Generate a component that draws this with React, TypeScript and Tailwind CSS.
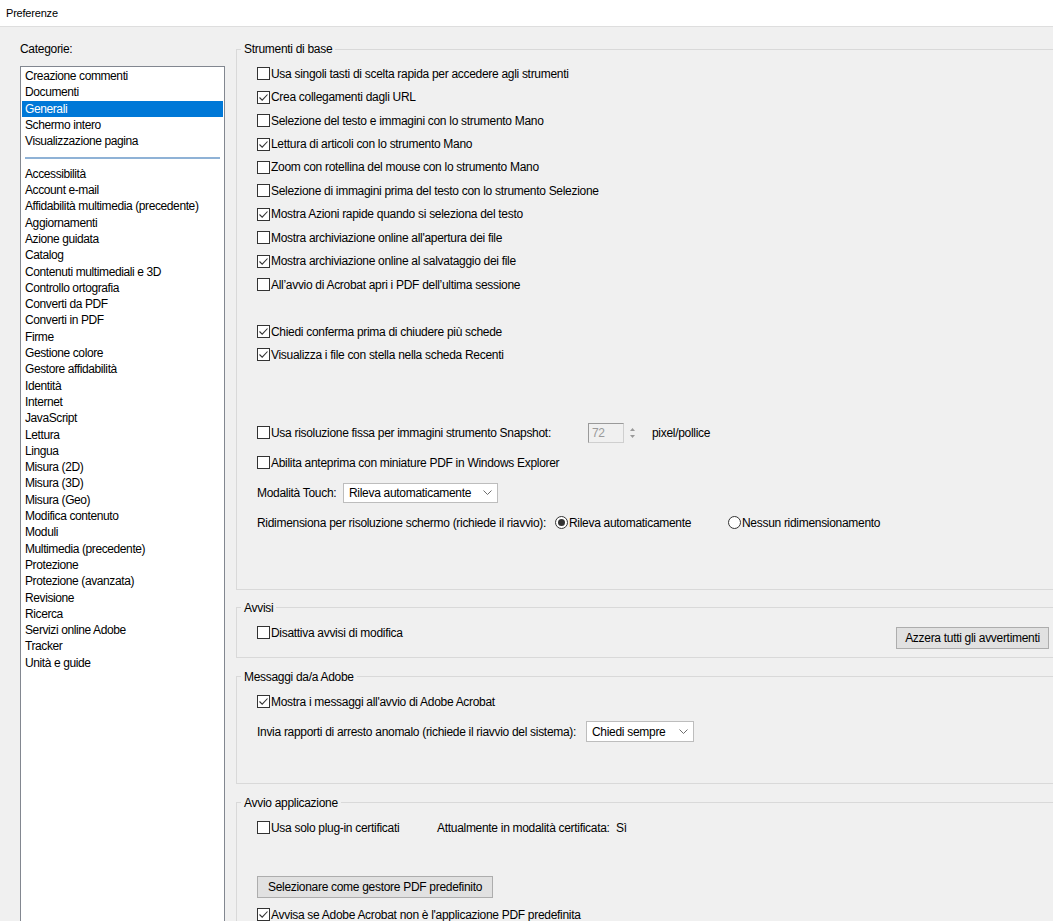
import React from "react";

const top = ["Creazione commenti", "Documenti", "Generali", "Schermo intero", "Visualizzazione pagina"];
const rest = [
  "Accessibilità",
  "Account e-mail",
  "Affidabilità multimedia (precedente)",
  "Aggiornamenti",
  "Azione guidata",
  "Catalog",
  "Contenuti multimediali e 3D",
  "Controllo ortografia",
  "Converti da PDF",
  "Converti in PDF",
  "Firme",
  "Gestione colore",
  "Gestore affidabilità",
  "Identità",
  "Internet",
  "JavaScript",
  "Lettura",
  "Lingua",
  "Misura (2D)",
  "Misura (3D)",
  "Misura (Geo)",
  "Modifica contenuto",
  "Moduli",
  "Multimedia (precedente)",
  "Protezione",
  "Protezione (avanzata)",
  "Revisione",
  "Ricerca",
  "Servizi online Adobe",
  "Tracker",
  "Unità e guide",
];

function Box({ checked = false }: { checked?: boolean }) {
  return (
    <span className="w-[13px] h-[13px] border border-[#333333] bg-white shrink-0 flex items-center justify-center">
      {checked && (
        <svg width="11" height="11" viewBox="0 0 11 11">
          <path d="M1.5 5.5 L4.2 8.2 L9.5 2.5" stroke="#333333" strokeWidth="1.1" fill="none" />
        </svg>
      )}
    </span>
  );
}

function Check({ checked = false, label }: { checked?: boolean; label: string }) {
  return (
    <div className="h-[23.44px] flex items-center gap-[1px]">
      <Box checked={checked} />
      <span className="whitespace-nowrap">{label}</span>
    </div>
  );
}

function Radio({ on = false }: { on?: boolean }) {
  return (
    <span className="w-[13px] h-[13px] rounded-full border border-[#333333] bg-white shrink-0 flex items-center justify-center">
      {on && <span className="w-[7px] h-[7px] rounded-full bg-[#333333]" />}
    </span>
  );
}

function Select({ value, w, h }: { value: string; w: string; h: string }) {
  return (
    <div className={`${w} ${h} border border-[#bdbdbd] bg-white flex items-center`}>
      <span className="flex-1 pl-[5px] whitespace-nowrap">{value}</span>
      <span className="w-[20px] h-full flex items-center justify-center">
        <svg width="9" height="5" viewBox="0 0 9 5">
          <path d="M0.5 0.5 L4.5 4.5 L8.5 0.5" stroke="#6d6d6d" strokeWidth="1" fill="none" />
        </svg>
      </span>
    </div>
  );
}

function Btn({ label, w }: { label: string; w: string }) {
  return (
    <div className={`${w} h-[22px] border border-[#adadad] bg-[#e1e1e1] flex items-center justify-center whitespace-nowrap`}>
      {label}
    </div>
  );
}

function Group({ title, className = "", children }: { title: string; className?: string; children: React.ReactNode }) {
  return (
    <fieldset className={`border border-[#d9d9d9] w-[819px] ${className}`}>
      <legend className="ml-[4px] px-[3px] leading-[16px] whitespace-nowrap">{title}</legend>
      {children}
    </fieldset>
  );
}

export default function App() {
  return (
    <div className="w-[1053px] h-[921px] overflow-hidden bg-[#f0f0f0] text-[12px] tracking-[-0.3px] text-black font-['Liberation_Sans',Arial,sans-serif] flex flex-col">
      <div className="h-[27px] shrink-0 bg-white border-b border-[#dedede] pl-[6px] flex items-center text-[11px] tracking-[-0.2px]">
        Preferenze
      </div>
      <div className="flex flex-row flex-1 min-h-0">
        <div className="w-[236px] shrink-0 pl-[20px] pt-[14px] flex flex-col">
          <div className="h-[16px] leading-[16px]">Categorie:</div>
          <div className="mt-[9px] pt-[1px] w-[205px] h-[870px] shrink-0 border border-[#828790] bg-white tracking-[-0.4px]">
            {top.map((t) => (
              <div
                key={t}
                className={
                  t === "Generali"
                    ? "h-[16.3px] leading-[16.3px] mx-[1px] pl-[3px] bg-[#0078d7] text-white whitespace-nowrap"
                    : "h-[16.3px] leading-[16.3px] pl-[4px] whitespace-nowrap"
                }
              >
                {t}
              </div>
            ))}
            <div className="h-[16.3px] flex items-center px-[4px]">
              <div className="w-full h-[2px] bg-[#8fb2d6]" />
            </div>
            {rest.map((t) => (
              <div key={t} className="h-[16.3px] leading-[16.3px] pl-[4px] whitespace-nowrap">
                {t}
              </div>
            ))}
          </div>
        </div>
        <div className="w-[819px] shrink-0 pt-[14px] flex flex-col">
          <Group title="Strumenti di base">
            <div className="pl-[20px] pt-[5px] pb-[51px] flex flex-col">
              <Check label="Usa singoli tasti di scelta rapida per accedere agli strumenti" />
              <Check checked label="Crea collegamenti dagli URL" />
              <Check label="Selezione del testo e immagini con lo strumento Mano" />
              <Check checked label="Lettura di articoli con lo strumento Mano" />
              <Check label="Zoom con rotellina del mouse con lo strumento Mano" />
              <Check label="Selezione di immagini prima del testo con lo strumento Selezione" />
              <Check checked label="Mostra Azioni rapide quando si seleziona del testo" />
              <Check label="Mostra archiviazione online all'apertura dei file" />
              <Check checked label="Mostra archiviazione online al salvataggio dei file" />
              <Check label="All’avvio di Acrobat apri i PDF dell’ultima sessione" />
              <div className="h-[23.44px]" />
              <Check checked label="Chiedi conferma prima di chiudere più schede" />
              <Check checked label="Visualizza i file con stella nella scheda Recenti" />

              <div className="mt-[51px] h-[30px] flex items-center">
                <div className="w-[331px] flex items-center gap-[1px]">
                  <Box />
                  <span className="whitespace-nowrap">Usa risoluzione fissa per immagini strumento Snapshot:</span>
                </div>
                <div className="w-[36px] h-[20px] border border-[#cfcfcf] border-t-[#9a9a9a] border-l-[#9a9a9a] bg-[#f0f0f0] pl-[3px] flex items-center text-[#9a9a9a]">
                  72
                </div>
                <div className="ml-[2px] w-[13px] h-[20px] flex flex-col items-center justify-center gap-[4px]">
                  <svg width="5" height="3" viewBox="0 0 5 3">
                    <path d="M0 3 L2.5 0 L5 3 Z" fill="#9a9a9a" />
                  </svg>
                  <svg width="5" height="3" viewBox="0 0 5 3">
                    <path d="M0 0 L2.5 3 L5 0 Z" fill="#9a9a9a" />
                  </svg>
                </div>
                <span className="ml-[13px] whitespace-nowrap">pixel/pollice</span>
              </div>
              <div className="h-[30px] flex items-center gap-[1px]">
                <Box />
                <span className="whitespace-nowrap">Abilita anteprima con miniature PDF in Windows Explorer</span>
              </div>
              <div className="h-[30px] flex items-center">
                <span className="w-[86px] whitespace-nowrap">Modalità Touch:</span>
                <Select value="Rileva automaticamente" w="w-[155px]" h="h-[20px]" />
              </div>
              <div className="h-[30px] flex items-center">
                <span className="w-[298px] whitespace-nowrap">Ridimensiona per risoluzione schermo (richiede il riavvio):</span>
                <div className="w-[173px] flex items-center gap-[1px]">
                  <Radio on />
                  <span className="whitespace-nowrap">Rileva automaticamente</span>
                </div>
                <div className="flex items-center gap-[1px]">
                  <Radio />
                  <span className="whitespace-nowrap">Nessun ridimensionamento</span>
                </div>
              </div>
            </div>
          </Group>

          <Group title="Avvisi" className="mt-[10px]">
            <div className="pl-[20px] pr-[5px] pt-[5px] pb-[8px] flex items-start justify-between">
              <div className="h-[24px] flex items-center gap-[1px]">
                <Box />
                <span className="whitespace-nowrap">Disattiva avvisi di modifica</span>
              </div>
              <div className="mt-[6px]">
                <Btn label="Azzera tutti gli avvertimenti" w="w-[153px]" />
              </div>
            </div>
          </Group>

          <Group title="Messaggi da/a Adobe" className="mt-[11px]">
            <div className="pl-[20px] pt-[5px] pb-[36px] flex flex-col">
              <div className="h-[24px] flex items-center gap-[1px]">
                <Box checked />
                <span className="whitespace-nowrap">Mostra i messaggi all'avvio di Adobe Acrobat</span>
              </div>
              <div className="mt-[3px] h-[30px] flex items-center">
                <span className="w-[329px] whitespace-nowrap">Invia rapporti di arresto anomalo (richiede il riavvio del sistema):</span>
                <Select value="Chiedi sempre" w="w-[108px]" h="h-[21px]" />
              </div>
            </div>
          </Group>

          <Group title="Avvio applicazione" className="mt-[11px]">
            <div className="pl-[20px] pt-[5px] pb-[30px] flex flex-col items-start">
              <div className="h-[24px] flex items-center">
                <div className="w-[180px] flex items-center gap-[1px]">
                  <Box />
                  <span className="whitespace-nowrap">Usa solo plug-in certificati</span>
                </div>
                <span className="w-[179px] whitespace-nowrap">Attualmente in modalità certificata:</span>
                <span>Sì</span>
              </div>
              <div className="mt-[36px]">
                <Btn label="Selezionare come gestore PDF predefinito" w="w-[236px]" />
              </div>
              <div className="mt-[5px] h-[24px] flex items-center gap-[1px]">
                <Box checked />
                <span className="whitespace-nowrap">Avvisa se Adobe Acrobat non è l'applicazione PDF predefinita</span>
              </div>
            </div>
          </Group>
        </div>
      </div>
    </div>
  );
}
